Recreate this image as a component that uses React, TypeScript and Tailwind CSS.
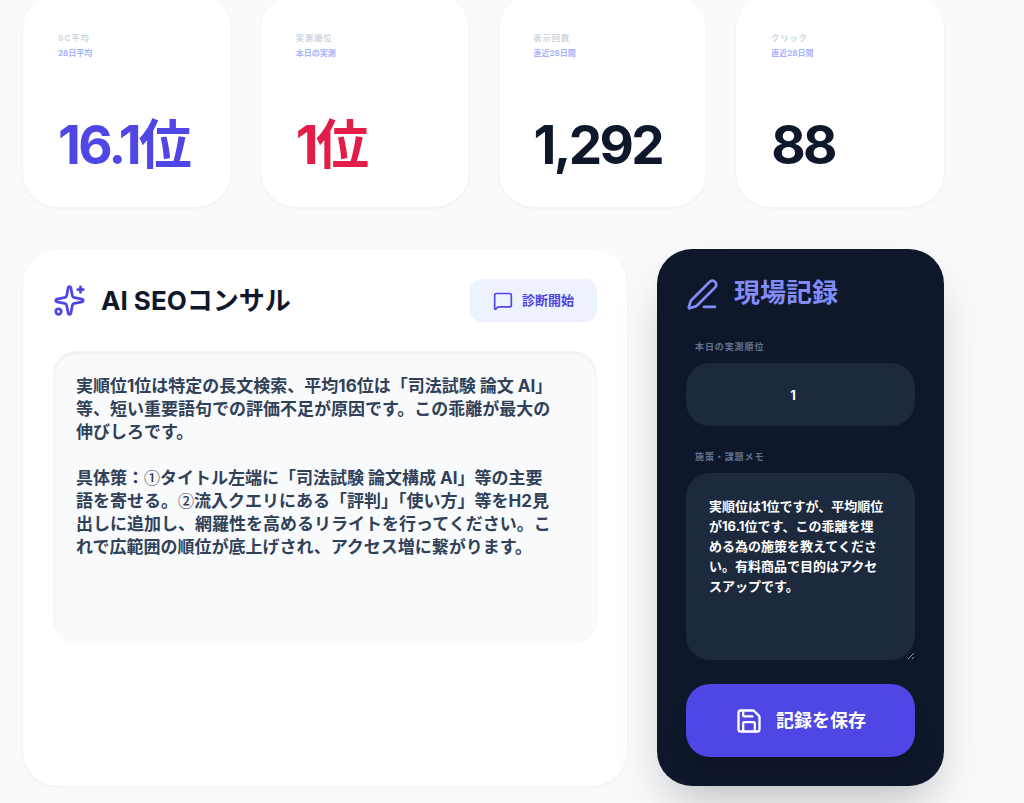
import { useState } from 'react';
import { MessageSquare, PenLine, Save, Sparkles } from 'lucide-react';

const stats = [
  { label: 'SC平均', sub: '28日平均', value: '16.1位', color: 'text-[#4f46e5]' },
  { label: '実測順位', sub: '本日の実測', value: '1位', color: 'text-[#e11d48]' },
  { label: '表示回数', sub: '直近28日間', value: '1,292', color: 'text-slate-900' },
  { label: 'クリック', sub: '直近28日間', value: '88', color: 'text-slate-900' },
];

const advice = `実順位1位は特定の長文検索、平均16位は「司法試験 論文 AI」等、短い重要語句での評価不足が原因です。この乖離が最大の伸びしろです。

具体策：①タイトル左端に「司法試験 論文構成 AI」等の主要語を寄せる。②流入クエリにある「評判」「使い方」等をH2見出しに追加し、網羅性を高めるリライトを行ってください。これで広範囲の順位が底上げされ、アクセス増に繋がります。`;

function StatCard({ label, sub, value, color }: (typeof stats)[number]) {
  return (
    <div className="flex min-h-[213px] flex-col justify-between rounded-[35px] bg-white p-[35px] pt-[38px] shadow-[0_1px_2px_1px_rgb(0_0_0/0.03)]">
      <div>
        <p className="text-[8px] leading-[13px] font-bold tracking-[0.15em] text-slate-300">{label}</p>
        <p className="mt-[2px] text-[8px] leading-[13px] font-bold text-[#a5b4fc]">{sub}</p>
      </div>
      <p className={`text-[53px] leading-none font-bold tracking-tighter whitespace-nowrap ${color}`}>{value}</p>
    </div>
  );
}

// Inter draws circled numbers oversized, so they use the Japanese face
function AdviceText({ text }: { text: string }) {
  return text.split(/([①②])/).map((part, i) =>
    /[①②]/.test(part) ? (
      <span key={i} className="font-['Noto_Sans_CJK_JP',sans-serif] text-[16px] leading-none font-medium">
        {part}
      </span>
    ) : (
      part
    )
  );
}

export default function App() {
  const [rank, setRank] = useState('1');
  const [memo, setMemo] = useState(
    '実順位は1位ですが、平均順位が16.1位です、この乖離を埋める為の施策を教えてください。有料商品で目的はアクセスアップです。'
  );

  return (
    <div
      lang="ja"
      className="min-h-screen overflow-hidden bg-slate-50 pr-20 pb-[17px] pl-[23px] font-['Inter','Noto_Sans_CJK_JP',sans-serif] text-slate-900"
    >
      <main className="-mt-[6px]">
        <section className="grid grid-cols-4 gap-[30px]">
          {stats.map((stat) => (
            <StatCard key={stat.label} {...stat} />
          ))}
        </section>

        <div className="mt-[42px] grid grid-cols-3 gap-[30px]">
          <section className="col-span-2 rounded-[35px] bg-white p-[30px] shadow-[0_1px_2px_1px_rgb(0_0_0/0.03)]">
            <div className="flex items-center justify-between">
              <h2 className="flex items-center gap-[15px] text-[26px] leading-[35px] font-bold">
                <Sparkles size={33} className="text-[#4f46e5]" />
                AI SEOコンサル
              </h2>
              <button
                type="button"
                className="flex h-[43px] items-center gap-[9px] rounded-xl bg-indigo-50 px-[23px] text-[13px] font-bold text-[#4f46e5]"
              >
                <MessageSquare size={20} />
                診断開始
              </button>
            </div>
            <div className="mt-[29px] min-h-[292px] rounded-3xl bg-slate-50 py-[24px] pr-[41px] pl-[23px] text-[17px] leading-[23px] font-bold whitespace-pre-wrap text-slate-700 shadow-[inset_0_2px_4px_rgb(0_0_0/0.05)]">
              <AdviceText text={advice} />
            </div>
          </section>

          <section className="rounded-[35px] bg-slate-900 p-[29px] text-white shadow-2xl">
            <h2 className="flex items-start gap-[15px] text-[26px] leading-[29px] font-bold text-[#818cf8]">
              <PenLine size={33} />
              現場記録
            </h2>
            <form className="mt-[29px] flex flex-col" onSubmit={(e) => e.preventDefault()}>
              <label htmlFor="rank" className="ml-[9px] text-[9px] leading-[14px] font-bold tracking-widest text-slate-500">
                本日の実測順位
              </label>
              <input
                id="rank"
                type="number"
                value={rank}
                onChange={(e) => setRank(e.target.value)}
                className="mt-[9px] h-[63px] w-full rounded-3xl bg-slate-800 px-[23px] text-center text-[13px] font-bold outline-none"
              />
              <label
                htmlFor="memo"
                className="mt-6 ml-[9px] text-[9px] leading-[14px] font-bold tracking-widest text-slate-500"
              >
                施策・課題メモ
              </label>
              <textarea
                id="memo"
                value={memo}
                onChange={(e) => setMemo(e.target.value)}
                className="mt-[9px] h-[187px] w-full rounded-3xl bg-slate-800 py-[23px] pr-[31px] pl-[23px] text-[13px] leading-[20px] font-bold outline-none"
              />
              <button
                type="submit"
                className="mt-6 flex h-[73px] items-center justify-center gap-[13px] rounded-3xl bg-[#4f46e5] text-[18px] font-bold shadow-xl"
              >
                <Save size={28} />
                記録を保存
              </button>
            </form>
          </section>
        </div>
      </main>
    </div>
  );
}
